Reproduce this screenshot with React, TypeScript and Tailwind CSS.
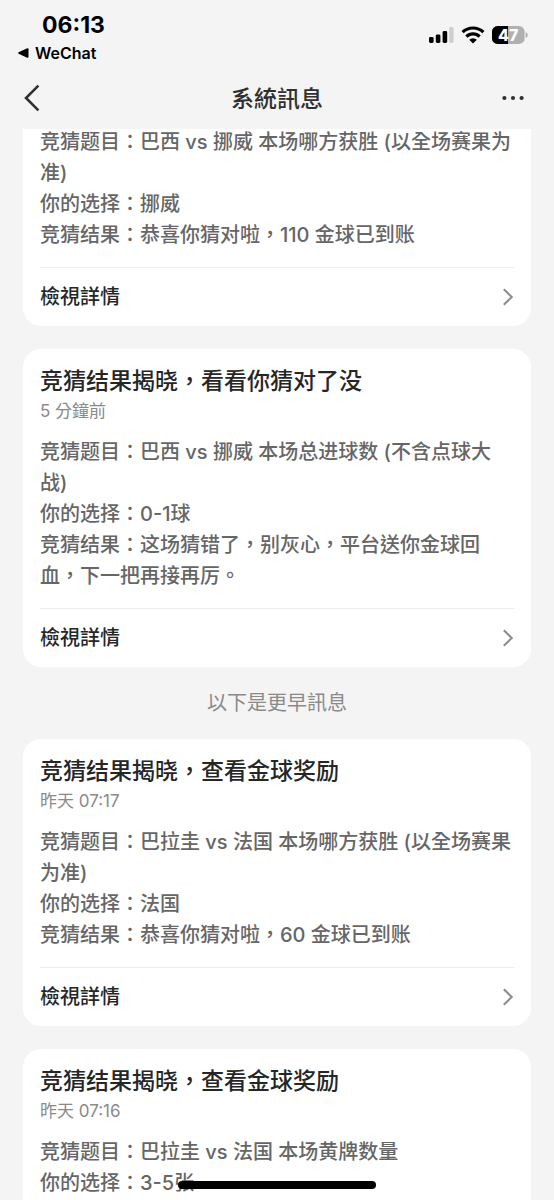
interface Message {
  id: number;
  title?: string;
  time?: string;
  lines: string[];
  detail?: boolean;
}

const recent: Message[] = [
  {
    id: 1,
    lines: [
      '竞猜题目：巴西 vs 挪威 本场哪方获胜 (以全场赛果为准)',
      '你的选择：挪威',
      '竞猜结果：恭喜你猜对啦，110 金球已到账',
    ],
    detail: true,
  },
  {
    id: 2,
    title: '竞猜结果揭晓，看看你猜对了没',
    time: '5 分鐘前',
    lines: [
      '竞猜题目：巴西 vs 挪威 本场总进球数 (不含点球大战)',
      '你的选择：0-1球',
      '竞猜结果：这场猜错了，别灰心，平台送你金球回血，下一把再接再厉。',
    ],
    detail: true,
  },
];

const earlier: Message[] = [
  {
    id: 3,
    title: '竞猜结果揭晓，查看金球奖励',
    time: '昨天 07:17',
    lines: [
      '竞猜题目：巴拉圭 vs 法国 本场哪方获胜 (以全场赛果为准)',
      '你的选择：法国',
      '竞猜结果：恭喜你猜对啦，60 金球已到账',
    ],
    detail: true,
  },
  {
    id: 4,
    title: '竞猜结果揭晓，查看金球奖励',
    time: '昨天 07:16',
    lines: ['竞猜题目：巴拉圭 vs 法国 本场黄牌数量', '你的选择：3-5张'],
  },
];

function StatusBar() {
  return (
    <div className="flex h-[70px] items-start justify-between pl-[18px] pr-[26px]">
      <div className="pt-[11px] text-black">
        <div className="pl-6 text-[23px] font-bold leading-7">06:13</div>
        <a href="#wechat" className="flex items-center gap-[6px] text-base font-semibold leading-7">
          <svg width="11" height="10" viewBox="0 0 11 10" fill="currentColor" aria-hidden="true">
            <path d="M0.6 4.3 9.2 0.3Q10.5 0 10.5 1.2V8.8Q10.5 10 9.2 9.7L0.6 5.7Q-0.2 5 0.6 4.3Z" />
          </svg>
          WeChat
        </a>
      </div>
      <div className="flex items-center gap-[7px] pt-[26px]">
        <svg width="25" height="18" viewBox="0 0 25 18" aria-hidden="true">
          <rect x="0" y="11" width="4.6" height="6" rx="1.4" />
          <rect x="6.8" y="8.4" width="4.6" height="8.6" rx="1.4" />
          <rect x="13.6" y="5" width="4.6" height="12" rx="1.4" />
          <rect x="20.2" y="1" width="4.4" height="16" rx="1.4" fill="#cfcfcf" />
        </svg>
        <svg width="24" height="18" viewBox="0 0 24 18" aria-hidden="true">
          <g fill="none" stroke="#000" strokeWidth="3.2">
            <path d="M1.6 6.2A15 15 0 0 1 22.4 6.2" />
            <path d="M5.4 10.6A9.4 9.4 0 0 1 18.6 10.6" />
          </g>
          <path d="M8.2 13.7A5.4 5.4 0 0 1 15.8 13.7L12 17.4Z" />
        </svg>
        <svg width="36" height="18" viewBox="0 0 36 18" aria-hidden="true">
          <rect width="32.6" height="18" rx="5.6" fill="#b0b0b0" />
          <path d="M5.6 0H16V18H5.6A5.6 5.6 0 0 1 0 12.4V5.6A5.6 5.6 0 0 1 5.6 0Z" />
          <path d="M33.6 6Q35.8 7 35.8 9T33.6 12Z" fill="#b0b0b0" />
          <text x="16.2" y="14.8" textAnchor="middle" fontSize="16" fontWeight="800" fill="#fff">
            47
          </text>
        </svg>
      </div>
    </div>
  );
}

function NavBar() {
  return (
    <div className="flex h-[59px] items-start justify-between px-6 text-[#303030]">
      <button type="button" aria-label="返回" className="flex h-14 w-16 items-center">
        <svg width="16" height="28" viewBox="0 0 16 28" fill="none" stroke="currentColor" strokeWidth="2.6" aria-hidden="true">
          <path d="M14.4 1.6 2 14 14.4 26.4" />
        </svg>
      </button>
      <h1 className="text-[23px] font-medium leading-[58px]">系統訊息</h1>
      <button type="button" aria-label="更多" className="flex h-14 w-16 items-center justify-end pr-[6px]">
        <svg width="22" height="6" viewBox="0 0 22 6" fill="currentColor" aria-hidden="true">
          <circle cx="2.4" cy="3" r="2.1" />
          <circle cx="11" cy="3" r="2.1" />
          <circle cx="19.6" cy="3" r="2.1" />
        </svg>
      </button>
    </div>
  );
}

function MessageCard({ message }: { message: Message }) {
  return (
    <article
      className={`bg-white px-[17px] ${message.title ? 'rounded-[18px]' : 'rounded-b-[18px]'}`}
    >
      {message.title && (
        <header className="pt-4">
          <h2 className="text-[23px] font-medium leading-8 text-[#262626]">{message.title}</h2>
          <p className="pb-3 pt-[2px] text-[17px] leading-[25px] text-[#8a8a8a]">{message.time}</p>
        </header>
      )}
      <div className="pb-4 pt-px text-xl font-medium leading-[31px] text-[#666666]">
        {message.lines.map((line) => (
          <p key={line}>{line}</p>
        ))}
      </div>
      {message.detail && (
        <a
          href={`#message-${message.id}`}
          className="flex h-[59px] items-center justify-between border-t border-[#ededed] text-xl font-medium text-[#262626]"
        >
          檢視詳情
          <svg width="12" height="18" viewBox="0 0 12 18" fill="none" stroke="#8c8c8c" strokeWidth="2" aria-hidden="true">
            <path d="M1.8 1.2 9.8 9 1.8 16.8" />
          </svg>
        </a>
      )}
    </article>
  );
}

export default function App() {
  return (
    <div
      lang="zh-Hant"
      className="relative flex h-screen flex-col overflow-hidden bg-[#f4f4f4] font-[Inter,'Noto_Sans_CJK_TC',sans-serif]"
    >
      <div className="z-10 shrink-0 bg-[#f4f4f4]">
        <StatusBar />
        <NavBar />
      </div>

      {/* list is scrolled a little way under the nav bar */}
      <main className="-mt-[3px] px-[23px]">
        <section className="flex flex-col gap-[23px]">
          {recent.map((message) => (
            <MessageCard key={message.id} message={message} />
          ))}
        </section>
        <p className="text-center text-xl leading-[72px] text-[#8a8a8a]">以下是更早訊息</p>
        <section className="flex flex-col gap-[23px]">
          {earlier.map((message) => (
            <MessageCard key={message.id} message={message} />
          ))}
        </section>
      </main>

      {/* home indicator */}
      <div className="absolute bottom-[11px] left-1/2 z-20 h-2 w-[198px] -translate-x-1/2 rounded-full bg-black" />
    </div>
  );
}
